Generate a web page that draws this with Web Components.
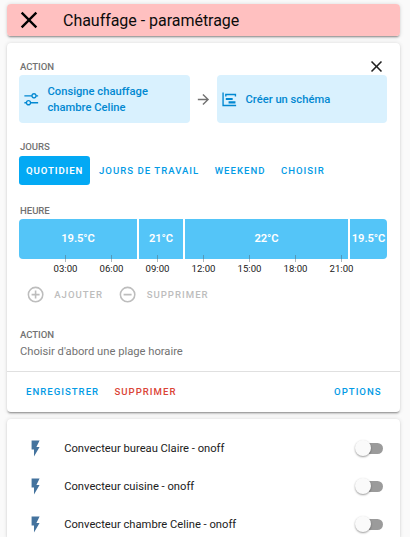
<!DOCTYPE html>
<html lang="fr">
<head>
<meta charset="utf-8">
<title>Chauffage - paramétrage</title>
<style>
html,body{height:100%;overflow:hidden}
body{margin:0;background:#fafafa;font-family:Roboto,"Noto Sans",sans-serif;color:#212121}
</style>
</head>
<body>
<heating-page></heating-page>
<script>
const define = (name, html, init) => customElements.define(name, class extends HTMLElement {
  constructor() {
    super();
    const t = document.createElement('template');
    t.innerHTML = html;
    this.attachShadow({mode: 'open'}).append(t.content.cloneNode(true));
  }
  connectedCallback() { if (init) init(this, this.shadowRoot); }
});

const ICONS = {
  close: 'M19,6.41L17.59,5L12,10.59L6.41,5L5,6.41L10.59,12L5,17.59L6.41,19L12,13.41L17.59,19L19,17.59L13.41,12L19,6.41Z',
  tune: 'M8 13C6.14 13 4.59 14.28 4.14 16H2V18H4.14C4.59 19.72 6.14 21 8 21S11.41 19.72 11.86 18H22V16H11.86C11.41 14.28 9.86 13 8 13M8 19C6.9 19 6 18.1 6 17C6 15.9 6.9 15 8 15S10 15.9 10 17C10 18.1 9.1 19 8 19M19.86 6C19.41 4.28 17.86 3 16 3S12.59 4.28 12.14 6H2V8H12.14C12.59 9.72 14.14 11 16 11S19.41 9.72 19.86 8H22V6H19.86M16 9C14.9 9 14 8.1 14 7C14 5.9 14.9 5 16 5S18 5.9 18 7C18 8.1 17.1 9 16 9Z',
  chart: 'M2,2H4V20H22V22H2V2M7,10H17V13H7V10M11,15H21V18H11V15M6,4H22V8H20V6H8V8H6V4Z',
  arrow: 'M4,11V13H16L10.5,18.5L11.92,19.92L19.84,12L11.92,4.08L10.5,5.5L16,11H4Z',
  plus: 'M12,20C7.59,20 4,16.41 4,12C4,7.59 7.59,4 12,4C16.41,4 20,7.59 20,12C20,16.41 16.41,20 12,20M12,2A10,10 0 0,0 2,12A10,10 0 0,0 12,22A10,10 0 0,0 22,12A10,10 0 0,0 12,2M13,7H11V11H7V13H11V17H13V13H17V11H13V7Z',
  minus: 'M12,20C7.59,20 4,16.41 4,12C4,7.59 7.59,4 12,4C16.41,4 20,7.59 20,12C20,16.41 16.41,20 12,20M12,2A10,10 0 0,0 2,12A10,10 0 0,0 12,22A10,10 0 0,0 22,12A10,10 0 0,0 12,2M7,13H17V11H7',
  flash: 'M7,2V13H10V22L17,10H13L17,2H7Z'
};

define('mdi-icon', `<style>:host{display:block;flex:none;width:19.2px;height:19.2px}svg{display:block;width:100%;height:100%;fill:currentColor}</style><svg viewBox="0 0 24 24"><path/></svg>`,
  (el, r) => r.querySelector('path').setAttribute('d', ICONS[el.getAttribute('name')]));

define('ha-card', `<style>:host{display:block;box-sizing:border-box;width:393px;background:#fff;border-radius:4px;box-shadow:0 1.6px 1.6px 0 rgba(0,0,0,.14),0 .8px 4px 0 rgba(0,0,0,.12),0 2.4px .8px -1.6px rgba(0,0,0,.2)}</style><slot></slot>`);

define('title-bar', `<style>:host{display:flex;align-items:center;height:32px;box-sizing:border-box;padding-left:8px;gap:20px;background:#ffc0c0;border-radius:4px;color:#0c0c0c;font-size:16px;line-height:32px}
mdi-icon{width:28px;height:28px;color:#000}span{padding-top:1px;letter-spacing:-.03px}</style><mdi-icon name="close"></mdi-icon><span><slot></slot></span>`);

define('section-label', `<style>:host{display:block;font-size:9.6px;line-height:14px;height:14px;padding-left:1px;color:#727272;font-weight:500;letter-spacing:-.05px;text-transform:uppercase}</style><slot></slot>`);

define('action-tile', `<style>:host{display:flex;box-sizing:border-box;align-items:center;height:48px;padding-left:4px;gap:8px;background:#d9f1fe;border-radius:4px;color:#0288d1;font-size:11.2px;font-weight:500;line-height:16px}
mdi-icon{width:16.5px;height:16.5px}span{padding-top:1px}</style><mdi-icon></mdi-icon><span><slot></slot></span>`,
  (el, r) => { const i = r.querySelector('mdi-icon'); const n = document.createElement('mdi-icon'); n.setAttribute('name', el.getAttribute('icon')); i.replaceWith(n); });

define('mwc-button', `<style>:host{display:flex;box-sizing:border-box;align-items:center;height:29px;padding:0 6.4px 1px 7px;color:#039be5;border-radius:3.2px;font-size:9.6px;font-weight:500;letter-spacing:1px;white-space:nowrap}
:host([raised]){background:#03a9f4;color:#fff;font-weight:600;width:71px;letter-spacing:.9px}:host([warn]){color:#db4437}:host([disabled]){color:#bdbdbd}</style><slot></slot>`);

define('time-bar', `<style>
:host{display:block;height:57px}
.bar{display:flex;gap:2px;height:40px;border-radius:4px;overflow:hidden}
.bar span{display:flex;align-items:center;justify-content:center;background:#54c5f8;color:#fff;font-size:11.2px;font-weight:600;letter-spacing:-.1px;line-height:40px}
.axis{display:flex;margin:-4px 0 0 23.5px;position:relative}
.axis span{width:46px;text-align:center;font-size:9.6px;line-height:12px;color:#212121}
.axis span::before{content:"";display:block;width:1px;height:7px;margin:0 auto 1px;background:rgba(80,100,110,.45)}
</style><div class="bar"><span style="width:118px">19.5°C</span><span style="width:44px">21°C</span><span style="width:163px">22°C</span><span style="width:37px">19.5°C</span></div>
<div class="axis"><span>03:00</span><span>06:00</span><span>09:00</span><span>12:00</span><span>15:00</span><span>18:00</span><span>21:00</span></div>`);

define('toggle-switch', `<style>:host{display:flex;align-items:center;width:28px;height:16px}
.track{display:block;flex:1;height:11px;margin-left:1px;border-radius:6px;background:#9b9b9b}
.knob{display:block;flex:none;width:16px;height:16px;margin-right:-16px;border-radius:50%;background:#fafafa;box-shadow:0 1px 2px rgba(0,0,0,.4);z-index:1}</style><span class="knob"></span><span class="track"></span>`);

define('entity-row', `<style>:host{display:flex;align-items:center;height:38.2px;padding:0 17px 0 19px;font-size:11.2px}
mdi-icon{color:#44739e;margin-right:19px}span{flex:1}</style><mdi-icon name="flash"></mdi-icon><span><slot></slot></span><toggle-switch></toggle-switch>`);

define('scheduler-editor', `<style>
:host{display:flex;flex-direction:column;height:369px}
.content{height:328px;box-sizing:border-box;padding:17px 13px 0 12px}
.top{display:flex;justify-content:space-between;height:15px}
.top mdi-icon{width:19px;height:19px;margin:-3px 1px 0 0}
.tiles{display:grid;grid-template-columns:171px 27px 170px;align-items:center;justify-items:stretch}
.tiles>mdi-icon{width:17px;height:17px;color:#727272;justify-self:center}
.days{display:flex;gap:2px;margin:2px 0 19px}
.days-label{margin-top:17px}
.time{margin-top:1px}
.slots{display:flex;align-items:center;height:29px;padding-left:7px;margin-top:4px;color:#bdbdbd}
.slots mwc-button+mdi-icon{margin-left:9px}
.slots mwc-button{padding-left:9px}
.last{margin-top:19px}
.hint{font-size:11.2px;line-height:16px;margin:2px 0 0 1px;color:#727272}
.footer{display:flex;align-items:center;flex:1;border-top:1px solid #e0e0e0;padding:0 12px;gap:2px}
.footer mwc-button:last-child{margin-left:auto}
</style>
<div class="content">
<div class="top"><section-label>Action</section-label><mdi-icon name="close"></mdi-icon></div>
<div class="tiles"><action-tile icon="tune">Consigne chauffage<br>chambre Celine</action-tile><mdi-icon name="arrow"></mdi-icon><action-tile icon="chart">Créer un schéma</action-tile></div>
<section-label class="days-label">Jours</section-label>
<div class="days"><mwc-button raised>QUOTIDIEN</mwc-button><mwc-button>JOURS DE TRAVAIL</mwc-button><mwc-button>WEEKEND</mwc-button><mwc-button>CHOISIR</mwc-button></div>
<section-label>Heure</section-label>
<time-bar class="time"></time-bar>
<div class="slots"><mdi-icon name="plus"></mdi-icon><mwc-button disabled>AJOUTER</mwc-button><mdi-icon name="minus"></mdi-icon><mwc-button disabled>SUPPRIMER</mwc-button></div>
<section-label class="last">Action</section-label>
<div class="hint">Choisir d'abord une plage horaire</div>
</div>
<div class="footer"><mwc-button>ENREGISTRER</mwc-button><mwc-button warn>SUPPRIMER</mwc-button><mwc-button>OPTIONS</mwc-button></div>`);

define('heating-page', `<style>:host{display:flex;flex-direction:column;gap:7px;padding:4px 0 0 7px;height:537px;box-sizing:border-box;overflow:hidden}
ha-card{flex:none}
.entities{padding:10px 0 0;height:118px;border-radius:4px 4px 0 0}</style>
<ha-card><title-bar>Chauffage - paramétrage</title-bar></ha-card>
<ha-card><scheduler-editor></scheduler-editor></ha-card>
<ha-card class="entities"><entity-row>Convecteur bureau Claire - onoff</entity-row><entity-row>Convecteur cuisine - onoff</entity-row><entity-row style="height:37.6px">Convecteur chambre Celine - onoff</entity-row></ha-card>`);
</script>
</body>
</html>
